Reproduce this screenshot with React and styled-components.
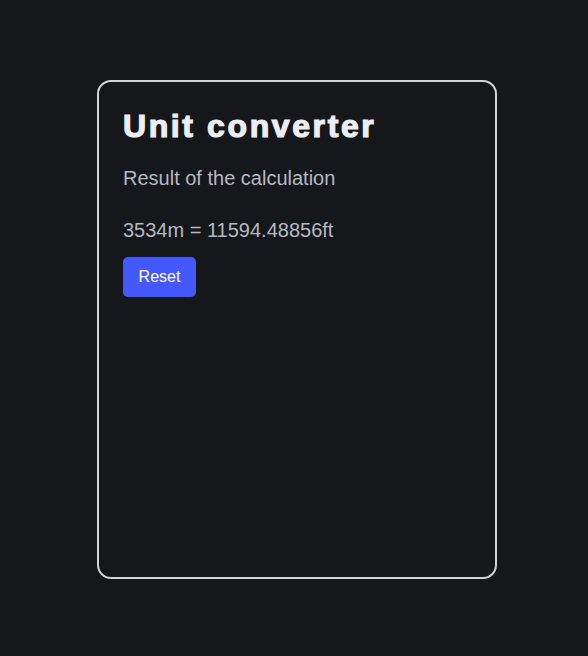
import React from 'react';
import styled, { createGlobalStyle } from 'styled-components';

const Global = createGlobalStyle`
  html, body {
    margin: 0;
    background: #16171b;
    font-family: "Liberation Sans", Arial, sans-serif;
  }
`;

const Page = styled.div`
  min-height: 656px;
  display: flex;
  justify-content: center;
  padding-top: 80px;
  box-sizing: border-box;
`;

const Card = styled.div`
  width: 400px;
  height: 499px;
  box-sizing: border-box;
  border: 2px solid #d2d3d6;
  border-radius: 14px;
  padding: 25px 24px;
  margin-left: 6px;
`;

const Title = styled.h1`
  margin: 0;
  font-size: 32px;
  line-height: 38px;
  font-weight: 900;
  color: #eceef2;
  letter-spacing: 2.6px;
  -webkit-text-stroke: 1.2px #eceef2;
`;

const Text = styled.p`
  margin: ${p => p.$top || 0}px 0 0;
  font-size: 20px;
  line-height: 24px;
  color: #b4b9c2;
`;

const Button = styled.button`
  margin-top: 15px;
  width: 73px;
  height: 40px;
  border: none;
  border-radius: 5px;
  background: #4458ff;
  color: #ffffff;
  font-family: inherit;
  font-size: 16px;
  cursor: pointer;
`;

export default function App() {
  return (
    <>
      <Global />
      <Page>
        <Card>
          <Title>Unit converter</Title>
          <Text $top={21}>Result of the calculation</Text>
          <Text $top={28}>3534m = 11594.48856ft</Text>
          <Button>Reset</Button>
        </Card>
      </Page>
    </>
  );
}
